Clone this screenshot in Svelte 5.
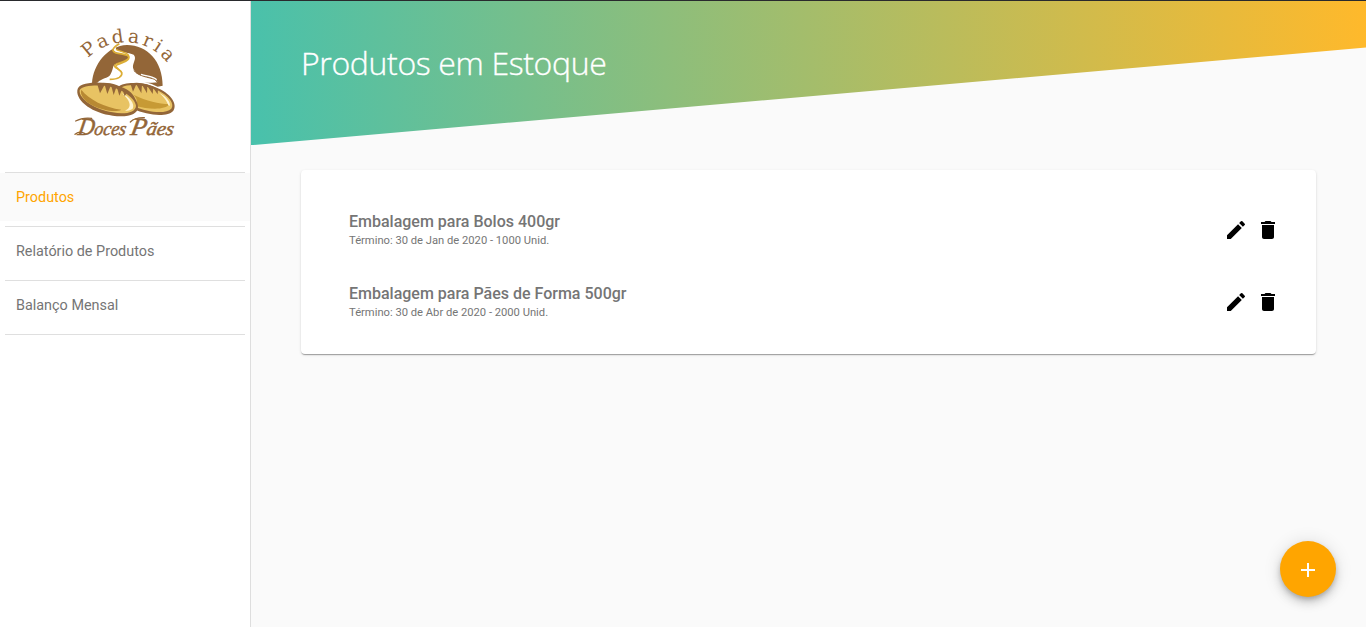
<script>
  const links = ['Produtos', 'Relatório de Produtos', 'Balanço Mensal'];
  const products = [
    { name: 'Embalagem para Bolos 400gr', info: 'Término: 30 de Jan de 2020 - 1000 Unid.' },
    { name: 'Embalagem para Pães de Forma 500gr', info: 'Término: 30 de Abr de 2020 - 2000 Unid.' }
  ];
  let active = $state(0);
</script>

<div class="layout">
  <aside>
    <svg class="logo" viewBox="0 0 360 390" role="img" aria-label="Padaria Doces Pães">
      <path id="arc" d="M69 130A157 157 0 0 1 324 172" fill="none" />
      <text class="arched"><textPath href="#arc" textLength="270" lengthAdjust="spacing">Padaria</textPath></text>
      <path fill="#936638" d="M81 205C84 148 128 92 186 90C247 90 293 139 293 212L278 215C240 198 202 190 174 204C145 210 112 199 81 205Z" />
      <path fill="#fff" d="M166 82C145 93 139 104 153 112C176 119 196 119 189 133C181 144 149 143 145 154C142 166 140 172 135 181C128 190 112 189 97 203L172 210C200 194 251 207 278 202C273 190 251 188 236 184C219 179 208 172 204 158C202 143 217 130 206 119C192 111 158 112 153 101C150 94 157 89 166 82Z" />
      <path fill="none" stroke="#936638" stroke-width="3" d="M207 167C220 184 252 187 269 193L279 204" />
      <path fill="none" stroke="#fff" stroke-width="4" d="M228 178C245 184 264 184 275 194" />
      <path fill="none" stroke="#dcae36" stroke-width="5" d="M163 86C143 98 137 107 153 114C176 118 198 120 190 133C181 145 151 147 152 155C163 166 181 174 163 187C154 193 145 193 134 193" />
      <path fill="none" stroke="#dcae36" stroke-width="4" d="M153 103C172 112 198 114 190 130C178 144 147 143 148 154C153 162 167 164 171 173" />
      <g>
        <path fill="#936638" d="M158 216C180 197 242 201 282 221C319 238 338 268 325 287C308 307 248 302 205 282Z" />
        <path fill="#e8c363" d="M170 217C193 204 242 210 278 226C312 242 330 268 319 281C300 299 246 290 208 275C220 249 197 225 170 217Z" />
        <path fill="#c79a35" d="M205 239C246 258 281 267 313 267C302 286 250 283 212 273C220 262 216 248 205 239Z" />
        <path fill="#fff4d2" d="M282 233C304 244 318 262 314 273C305 269 310 256 282 233Z" />
        <path fill="#936638" d="M196 205L204 230L214 208L229 235L231 209L246 235L247 213L263 237L265 220L278 238L279 222C249 205 222 200 196 205Z" />
      </g>
      <g>
        <path fill="#936638" d="M37 226C39 205 74 201 112 204C166 207 218 241 219 275C220 299 186 308 143 302C86 296 33 260 37 226Z" />
        <path fill="#e8c363" d="M44 226C50 212 84 210 119 212C168 218 210 248 213 272C213 293 178 299 143 292C91 285 40 251 44 226Z" />
        <path fill="#b88933" d="M49 224C72 254 119 277 169 284C150 294 112 285 86 273C60 260 43 240 49 224Z" />
        <path fill="#fff4d2" d="M170 234C193 245 211 267 203 281C196 286 188 287 180 287C204 277 195 255 170 234Z" />
        <path fill="#936638" d="M96 205L105 235L119 209L127 237L138 210L146 240L155 214L163 242L172 221L179 244L188 230C163 208 132 200 96 205Z" />
      </g>
      <g transform="translate(0 359) skewX(-10)">
        <text class="script" x="36" y="0" textLength="145" lengthAdjust="spacingAndGlyphs"><tspan class="cap">D</tspan>oces</text>
        <text class="script" x="194" y="0" textLength="130" lengthAdjust="spacingAndGlyphs"><tspan class="cap">P</tspan>ães</text>
      </g>
      <path fill="none" stroke="#936638" stroke-width="4" stroke-linecap="round" d="M32 318Q52 307 80 310M30 358Q45 346 60 356M196 321Q210 307 238 308" />
    </svg>
    <nav>
      {#each links as link, i}
        <button class:active={active === i} onclick={() => (active = i)}>{link}</button>
      {/each}
    </nav>
  </aside>

  <main>
    <header><h1>Produtos em Estoque</h1></header>
    <section class="card">
      {#each products as product}
        <article>
          <div class="details">
            <h2>{product.name}</h2>
            <p>{product.info}</p>
          </div>
          <svg viewBox="0 0 24 24" aria-label="Editar"><path d="M3 17.25V21h3.75L17.81 9.94l-3.75-3.75L3 17.25zM20.71 7.04a1 1 0 0 0 0-1.41l-2.34-2.34a1 1 0 0 0-1.41 0l-1.83 1.83 3.75 3.75 1.83-1.83z" /></svg>
          <svg viewBox="0 0 24 24" aria-label="Excluir"><path d="M6 19c0 1.1.9 2 2 2h8c1.1 0 2-.9 2-2V7H6v12zM19 4h-3.5l-1-1h-5l-1 1H5v2h14V4z" /></svg>
        </article>
      {/each}
    </section>
    <button class="fab" aria-label="Adicionar"><svg viewBox="0 0 24 24"><path d="M19 13h-6v6h-2v-6H5v-2h6V5h2v6h6v2z" /></svg></button>
  </main>
</div>

<style>
  :global(body) { margin: 0; overflow: hidden; }
  * { box-sizing: border-box; }
  .layout {
    display: flex;
    height: 100vh;
    border-top: 1px solid #292a2d;
    background: #fafafa;
    font-family: Roboto, sans-serif;
    color: #757575;
  }
  aside {
    width: 251px;
    flex: none;
    display: flex;
    flex-direction: column;
    background: #fff;
    border-right: 1px solid #dedede;
  }
  .logo { width: 120px; height: 130px; margin: 14px 0 27px 65px; }
  .arched { font: 56px "DejaVu Serif", serif; fill: #936638; }
  .script { font: italic 58px "Liberation Serif", serif; fill: #936638; stroke: #936638; stroke-width: 1.5; }
  .cap { font-size: 74px; }
  nav { display: flex; flex-direction: column; }
  nav::before, nav button::after {
    content: "";
    display: block;
    height: 1px;
    margin: 0 5px;
    background: #dfdfdf;
  }
  nav button {
    padding: 0;
    border: 0;
    height: 54px;
    font: 14.4px/50px Roboto, sans-serif;
    color: #757575;
    text-align: left;
    text-indent: 16px;
    background: none;
  }
  nav button::after { margin-top: 3px; }
  nav button.active { color: #ffa500; background: linear-gradient(#fafafa 48px, #fff 48px); }
  main { flex: 1; min-width: 0; }
  header {
    height: 144px;
    padding: 36px 50px 0;
    background: linear-gradient(85deg, #48c1ac, #ffb92b);
    clip-path: polygon(0 0, 100% 0, 100% 46.5px, 0 144.2px);
  }
  h1 {
    margin: 0;
    font: 300 32px/52px "Open Sans", sans-serif;
    letter-spacing: -0.36px;
    -webkit-text-stroke: 0.35px #fff;
    white-space: nowrap;
    color: #fff;
  }
  .card {
    margin: 25px 50px 0;
    height: 184px;
    padding: 24px 36px 16px 48px;
    border-radius: 4px;
    background: #fff;
    box-shadow: 0 2px 1px -1px #0003, 0 1px 1px #00000024, 0 1px 3px #0000001f;
  }
  article { display: flex; align-items: center; height: 72px; gap: 8px; }
  .details { flex: 1; }
  h2 { margin: 0; font: 500 16px/20px Roboto, sans-serif; }
  p { margin: 2px 0 0; font: 11.2px/14px Roboto, sans-serif; }
  article svg { width: 24px; height: 24px; fill: #000; }
  .fab {
    position: absolute;
    right: 30px;
    bottom: 30px;
    width: 56px;
    height: 56px;
    padding: 17px 16px 15px;
    border: 0;
    border-radius: 50%;
    background: #ffa500;
    box-shadow: 0 3px 5px -1px #0003, 0 6px 10px #00000024, 0 1px 18px #0000001f;
  }
  .fab svg { display: block; width: 24px; height: 24px; fill: #fff; }
</style>
